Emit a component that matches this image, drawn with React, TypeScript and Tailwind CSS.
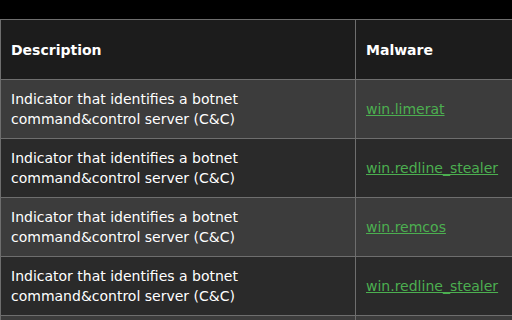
const rows = [
  'win.limerat',
  'win.redline_stealer',
  'win.remcos',
  'win.redline_stealer',
];

export default function App() {
  return (
    <div className="w-[512px] h-[320px] overflow-hidden bg-black text-white font-['DejaVu_Sans',sans-serif]">
      <div className="h-[19px]" />
      <table className="w-[560px] border-collapse text-[14px] leading-[20px]">
        <thead>
          <tr className="bg-[#1c1c1c] h-[60px]">
            <th className="w-[355px] border border-[#6e6e6e] px-[10px] text-left font-bold">Description</th>
            <th className="border border-[#6e6e6e] px-[10px] text-left font-bold">Malware</th>
          </tr>
        </thead>
        <tbody>
          {rows.map((m, i) => (
            <tr key={i} className={`h-[59px] ${i % 2 === 0 ? 'bg-[#3c3c3c]' : 'bg-[#2a2a2a]'}`}>
              <td className="border border-[#6e6e6e] px-[10px]">
                Indicator that identifies a botnet
                <br />
                command&amp;control server (C&amp;C)
              </td>
              <td className="border border-[#6e6e6e] px-[10px]">
                <a href="#" className="text-[#4caf50] underline">
                  {m}
                </a>
              </td>
            </tr>
          ))}
          {/* next row starts at the bottom edge, contents out of view */}
          <tr className="h-[59px] bg-[#3c3c3c]">
            <td className="border border-[#6e6e6e]" />
            <td className="border border-[#6e6e6e]" />
          </tr>
        </tbody>
      </table>
    </div>
  );
}
